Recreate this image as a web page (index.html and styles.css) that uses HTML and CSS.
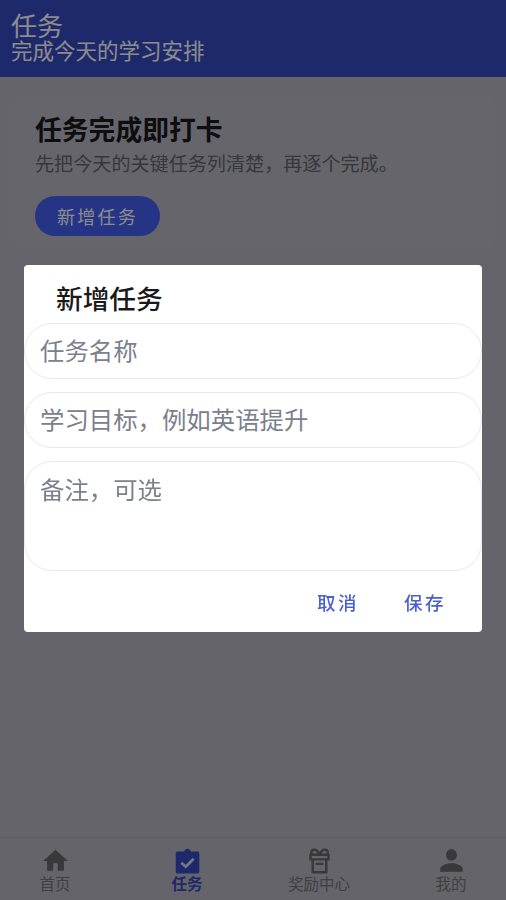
FILE: index.html
```html
<!DOCTYPE html>
<html lang="zh-CN">
<head>
    <meta charset="UTF-8">
    <meta name="viewport" content="width=device-width, initial-scale=1.0">
    <title>任务</title>
    <link rel="stylesheet" href="styles.css">
</head>
<body>
  <div class="app">
    <header class="topbar">
      <h1>任务</h1>
      <p>完成今天的学习安排</p>
    </header>

    <main class="content">
      <section class="card">
        <h2>任务完成即打卡</h2>
        <p>先把今天的关键任务列清楚，再逐个完成。</p>
        <button type="button" class="add-btn">新增任务</button>
      </section>
    </main>

    <nav class="tabbar">
      <div class="tab">
        <svg viewBox="0 0 24 24"><path d="M10 21v-6.500h4V21h5.500v-8.500H23L12 2.500 1 12.500h3.500V21z"/></svg>
        <span>首页</span>
      </div>
      <div class="tab active">
        <svg viewBox="0 0 24 24">
          <path d="M3 4h6c.5-1.500 1.700-2.500 3-2.500s2.500 1 3 2.500h6a1.500 1.500 0 0 1 1.500 1.500V22a1.500 1.500 0 0 1-1.500 1.500H3A1.500 1.500 0 0 1 1.500 22V5.500A1.500 1.500 0 0 1 3 4z"/>
          <path class="tick" d="M6.500 14l4 3.500 7-7"/>
        </svg>
        <span>任务</span>
      </div>
      <div class="tab">
        <svg class="line" viewBox="0 0 24 24">
          <path d="M12 6.500C10.500 3.500 8.500 2 6.500 2.500 4.500 3 4 5.500 5.500 6.500c1.500 1 4 .5 6.500 0zm0 0c1.500-3 3.500-4.500 5.500-4 2 .5 2.500 3 1 4-1.500 1-4 .5-6.500 0z"/>
          <path d="M4 7h16v4H4zM6 11v11.500h12V11M8.500 15h7"/>
        </svg>
        <span>奖励中心</span>
      </div>
      <div class="tab">
        <svg viewBox="0 0 24 24"><path d="M12 12c2.800 0 4.800-2.200 4.800-5S14.800 2 12 2 7.200 4.200 7.200 7s2 5 4.800 5zm0 2.500c-3.500 0-10 1.700-10 5V22h20v-2.500c0-3.300-6.500-5-10-5z"/></svg>
        <span>我的</span>
      </div>
    </nav>
  </div>

  <div class="scrim">
    <form class="dialog">
      <h3>新增任务</h3>
      <input type="text" class="field" placeholder="任务名称">
      <input type="text" class="field" placeholder="学习目标，例如英语提升">
      <textarea class="field note" placeholder="备注，可选"></textarea>
      <div class="actions">
        <button type="button">取消</button>
        <button type="button">保存</button>
      </div>
    </form>
  </div>
</body>
</html>
```

FILE: styles.css
```css
* {
  box-sizing: border-box;
}

body {
  margin: 0;
  font-family: "Noto Sans CJK SC", "Noto Sans", sans-serif;
  background: #b6b6c1;
}

.app {
  height: 900px;
  display: flex;
  flex-direction: column;
}

.topbar {
  height: 77px;
  padding: 12px 11px 0;
  background: #384cc3;
  color: #fff;
}

.topbar h1 {
  margin: 0 0 1px;
  font-size: 26px;
  line-height: 26px;
  font-weight: 400;
}

.topbar p {
  margin: 0;
  font-size: 21.5px;
  line-height: 22px;
}

.content {
  flex: 1;
  padding: 18px 12px 0;
}

.card {
  height: 153px;
  padding: 17px 23px 0;
  border-radius: 12px;
  background: #b9b9c4;
}

.card h2 {
  margin: 0;
  font-size: 26.8px;
  line-height: 34px;
  font-weight: 700;
  color: #1a1a20;
}

.card p {
  margin: 3px 0 0;
  font-size: 19.1px;
  line-height: 28px;
  color: #64646e;
}

.add-btn {
  display: block;
  width: 125px;
  height: 40px;
  margin-top: 19px;
  border: none;
  border-radius: 20px;
  background: #4560f5;
  color: #fff;
  font: inherit;
  font-size: 18px;
  letter-spacing: 2.3px;
}

.tabbar {
  height: 63px;
  display: flex;
  justify-content: center;
  background: #b6b6c1;
  border-top: 1px solid #acacb6;
}

.tab {
  flex: 0 0 132px;
  display: flex;
  flex-direction: column;
  align-items: center;
  padding-top: 9px;
  color: #74747c;
  font-size: 15.5px;
  line-height: 20px;
}

.tab svg {
  width: 27px;
  height: 27px;
  fill: #66666f;
}

.tab span {
  margin-top: -1px;
}

.tab.active {
  color: #384cc3;
  font-weight: 700;
}

.tab.active svg {
  fill: #384cc3;
}

.tab svg .tick {
  fill: none;
  stroke: #d8dcec;
  stroke-width: 2.4;
}

.tab svg.line {
  fill: none;
  stroke: #66666f;
  stroke-width: 2.2;
}

.scrim {
  position: fixed;
  inset: 0;
  display: flex;
  align-items: center;
  justify-content: center;
  padding-bottom: 3px;
  background: rgba(0, 0, 0, 0.45);
}

.dialog {
  width: 458px;
  height: 367px;
  display: flex;
  flex-direction: column;
  border-radius: 4px;
  background: #fff;
}

.dialog h3 {
  margin: 0;
  padding: 16px 32px 0;
  height: 58px;
  font-size: 26.7px;
  line-height: 34px;
  font-weight: 500;
  color: #1a1a1a;
}

.field {
  width: 100%;
  height: 56px;
  margin-bottom: 13px;
  padding: 0 15px 3px;
  border: 1.5px solid #e6e8ee;
  border-radius: 28px;
  outline: none;
  background: #fff;
  font-family: inherit;
  font-size: 24.4px;
}

.field::placeholder {
  color: #7b808c;
  opacity: 1;
}

.note {
  display: block;
  height: 110px;
  margin-bottom: 0;
  padding-top: 9px;
  resize: none;
}

.actions {
  display: flex;
  justify-content: flex-end;
  gap: 45px;
  padding: 19px 36px 0 0;
}

.actions button {
  padding: 0;
  border: none;
  background: none;
  color: #4a5fd0;
  font-family: inherit;
  font-size: 18.5px;
  font-weight: 500;
  line-height: 24px;
  letter-spacing: 2.5px;
}
```
